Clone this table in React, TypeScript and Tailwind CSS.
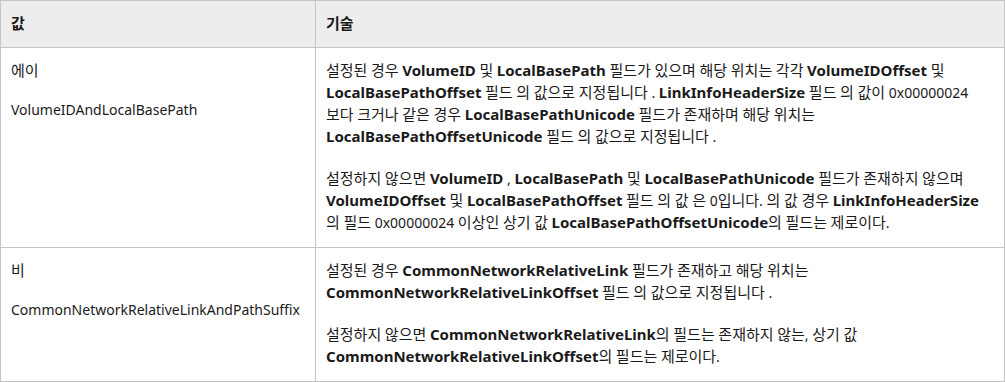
import React from "react";

const FONT = '"Noto Sans", "Noto Sans CJK KR", sans-serif';

// Hangul runs are set a little larger so their advance matches the original
const T = ({ s }: { s: string }) => (
  <>
    {s.split(/([\uAC00-\uD7A3]+)/).map((part, i) =>
      /[\uAC00-\uD7A3]/.test(part) ? (
        <span key={i} className="text-[15px] leading-[16px]">
          {part}
        </span>
      ) : (
        part
      )
    )}
  </>
);

const B = ({ children }: { children: string }) => (
  <b className="font-bold text-[15px] leading-[16px]">{children}</b>
);

interface Row {
  value: string;
  name: string;
  paras: React.ReactNode[];
}

const ROWS: Row[] = [
  {
    value: "에이",
    name: "VolumeIDAndLocalBasePath",
    paras: [
      <>
        <T s="설정된 경우 " />
        <B>VolumeID</B>
        <T s=" 및 " />
        <B>LocalBasePath</B>
        <T s=" 필드가 있으며 해당 위치는 각각 " />
        <B>VolumeIDOffset</B>
        <T s=" 및 " />
        <B>LocalBasePathOffset</B>
        <T s=" 필드 의 값으로 지정됩니다 . " />
        <B>LinkInfoHeaderSize</B>
        <T s=" 필드 의 값이 0x00000024 보다 크거나 같은 경우 " />
        <B>LocalBasePathUnicode</B>
        <T s=" 필드가 존재하며 해당 위치는 " />
        <B>LocalBasePathOffsetUnicode</B>
        <T s=" 필드 의 값으로 지정됩니다 ." />
      </>,
      <>
        <T s="설정하지 않으면 " />
        <B>VolumeID</B>
        <T s=" , " />
        <B>LocalBasePath</B>
        <T s=" 및 " />
        <B>LocalBasePathUnicode</B>
        <T s=" 필드가 존재하지 않으며 " />
        <B>VolumeIDOffset</B>
        <T s=" 및 " />
        <B>LocalBasePathOffset</B>
        <T s=" 필드 의 값 은 0입니다. 의 값 경우 " />
        <B>LinkInfoHeaderSize</B>
        <T s=" 의 필드 0x00000024 이상인 상기 값 " />
        <B>LocalBasePathOffsetUnicode</B>
        <T s="의 필드는 제로이다." />
      </>,
    ],
  },
  {
    value: "비",
    name: "CommonNetworkRelativeLinkAndPathSuffix",
    paras: [
      <>
        <T s="설정된 경우 " />
        <B>CommonNetworkRelativeLink</B>
        <T s=" 필드가 존재하고 해당 위치는 " />
        <B>CommonNetworkRelativeLinkOffset</B>
        <T s=" 필드 의 값으로 지정됩니다 ." />
      </>,
      <>
        <T s="설정하지 않으면 " />
        <B>CommonNetworkRelativeLink</B>
        <T s="의 필드는 존재하지 않는, 상기 값 " />
        <B>CommonNetworkRelativeLinkOffset</B>
        <T s="의 필드는 제로이다." />
      </>,
    ],
  },
];

export default function App() {
  return (
    <div className="w-[1005px] h-[382px] bg-white" style={{ fontFamily: FONT }}>
      <table className="w-[1005px] border-collapse text-[14px] leading-[22px] text-[#1a1a1a] table-fixed break-keep">
        <colgroup>
          <col className="w-[315px]" />
          <col />
        </colgroup>
        <thead>
          <tr className="bg-[#ededed] h-[47px]">
            <th className="border border-[#c4c4c4] px-[10px] text-left font-bold align-middle">
              <T s="값" />
            </th>
            <th className="border border-[#c4c4c4] px-[10px] text-left font-bold align-middle">
              <T s="기술" />
            </th>
          </tr>
        </thead>
        <tbody>
          {ROWS.map((row) => (
            <tr key={row.name}>
              <td className="border border-[#c4c4c4] px-[10px] pt-3 pb-[13px] align-top">
                <p>
                  <T s={row.value} />
                </p>
                <p className="mt-[17px]">{row.name}</p>
              </td>
              <td className="border border-[#c4c4c4] px-[10px] pt-3 pb-[13px] align-top">
                {row.paras.map((p, i) => (
                  <p key={i} className={i > 0 ? "mt-[20px]" : ""}>
                    {p}
                  </p>
                ))}
              </td>
            </tr>
          ))}
        </tbody>
      </table>
    </div>
  );
}
